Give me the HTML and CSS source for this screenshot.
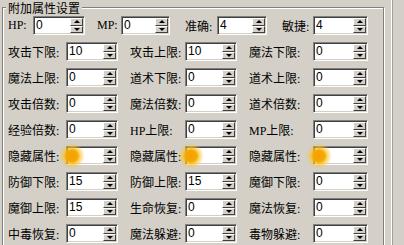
FILE: index.html
```html
<!DOCTYPE html>
<html lang="zh-CN">
<head>
  <meta charset="UTF-8" />
  <title>附加属性设置</title>
  <link rel="stylesheet" href="styles.css">
</head>
<body>
  <div class="group">
    <div class="title">附加属性设置</div>

    <div class="top-row">
      <label>HP:</label>
      <div class="spin"><span class="val">0</span><span class="btns"><i class="up"></i><i class="down"></i></span></div>
      <label>MP:</label>
      <div class="spin"><span class="val">0</span><span class="btns"><i class="up"></i><i class="down"></i></span></div>
      <label>准确:</label>
      <div class="spin"><span class="val">4</span><span class="btns"><i class="up"></i><i class="down"></i></span></div>
      <label>敏捷:</label>
      <div class="spin"><span class="val">4</span><span class="btns"><i class="up"></i><i class="down"></i></span></div>
    </div>

    <div class="grid">
      <label>攻击下限:</label>
      <div class="spin"><span class="val">10</span><span class="btns"><i class="up"></i><i class="down"></i></span></div>
      <label>攻击上限:</label>
      <div class="spin"><span class="val">10</span><span class="btns"><i class="up"></i><i class="down"></i></span></div>
      <label>魔法下限:</label>
      <div class="spin"><span class="val">0</span><span class="btns"><i class="up"></i><i class="down"></i></span></div>

      <label>魔法上限:</label>
      <div class="spin"><span class="val">0</span><span class="btns"><i class="up"></i><i class="down"></i></span></div>
      <label>道术下限:</label>
      <div class="spin"><span class="val">0</span><span class="btns"><i class="up"></i><i class="down"></i></span></div>
      <label>道术上限:</label>
      <div class="spin"><span class="val">0</span><span class="btns"><i class="up"></i><i class="down"></i></span></div>

      <label>攻击倍数:</label>
      <div class="spin"><span class="val">0</span><span class="btns"><i class="up"></i><i class="down"></i></span></div>
      <label>魔法倍数:</label>
      <div class="spin"><span class="val">0</span><span class="btns"><i class="up"></i><i class="down"></i></span></div>
      <label>道术倍数:</label>
      <div class="spin"><span class="val">0</span><span class="btns"><i class="up"></i><i class="down"></i></span></div>

      <label>经验倍数:</label>
      <div class="spin"><span class="val">0</span><span class="btns"><i class="up"></i><i class="down"></i></span></div>
      <label>HP上限:</label>
      <div class="spin"><span class="val">0</span><span class="btns"><i class="up"></i><i class="down"></i></span></div>
      <label>MP上限:</label>
      <div class="spin"><span class="val">0</span><span class="btns"><i class="up"></i><i class="down"></i></span></div>

      <label>隐藏属性:</label>
      <div class="spin"><span class="blob"></span><span class="val"></span><span class="btns"><i class="up"></i><i class="down"></i></span></div>
      <label>隐藏属性:</label>
      <div class="spin"><span class="blob"></span><span class="val"></span><span class="btns"><i class="up"></i><i class="down"></i></span></div>
      <label>隐藏属性:</label>
      <div class="spin"><span class="blob"></span><span class="val"></span><span class="btns"><i class="up"></i><i class="down"></i></span></div>

      <label>防御下限:</label>
      <div class="spin"><span class="val">15</span><span class="btns"><i class="up"></i><i class="down"></i></span></div>
      <label>防御上限:</label>
      <div class="spin"><span class="val">15</span><span class="btns"><i class="up"></i><i class="down"></i></span></div>
      <label>魔御下限:</label>
      <div class="spin"><span class="val">0</span><span class="btns"><i class="up"></i><i class="down"></i></span></div>

      <label>魔御上限:</label>
      <div class="spin"><span class="val">15</span><span class="btns"><i class="up"></i><i class="down"></i></span></div>
      <label>生命恢复:</label>
      <div class="spin"><span class="val">0</span><span class="btns"><i class="up"></i><i class="down"></i></span></div>
      <label>魔法恢复:</label>
      <div class="spin"><span class="val">0</span><span class="btns"><i class="up"></i><i class="down"></i></span></div>

      <label>中毒恢复:</label>
      <div class="spin"><span class="val">0</span><span class="btns"><i class="up"></i><i class="down"></i></span></div>
      <label>魔法躲避:</label>
      <div class="spin"><span class="val">0</span><span class="btns"><i class="up"></i><i class="down"></i></span></div>
      <label>毒物躲避:</label>
      <div class="spin"><span class="val">0</span><span class="btns"><i class="up"></i><i class="down"></i></span></div>
    </div>
  </div>
  <div class="edge"></div>
</body>
</html>
```

FILE: styles.css
```css
body {
  margin: 0;
  padding: 1px 0 0 2px;
  height: 244px;
  overflow: hidden;
  display: flex;
  align-items: flex-start;
  background-color: #d4d0c8;
  font-family: "Liberation Serif", "Noto Sans CJK SC", serif;
  font-size: 12px;
  color: #000;
}

/* 分组框 */
.group {
  box-sizing: border-box;
  width: 382px;
  height: 270px;
  margin-top: 6px;
  padding: 0 0 0 5px;
  border: 1px solid #808080;
  box-shadow: inset 1px 1px #fff, 1px 1px #fff;
}

.title {
  width: fit-content;
  margin: -7px 0 0 -2px;
  padding: 0 2px;
  line-height: 14px;
  background-color: #d4d0c8;
  font-family: "Noto Sans CJK SC", sans-serif;
}

.edge {
  width: 1px;
  height: 245px;
  margin: -1px 0 0 7px;
  border-left: 1px solid #fff;
  background-color: #a0a0a0;
}

label {
  display: flex;
  align-items: center;
  white-space: nowrap;
}

.top-row {
  display: grid;
  grid-template-columns: 25px 52px 36px 49px 47px 50px 46px 55px;
  height: 19px;
  margin-top: 1px;
}

.top-row label:nth-of-type(2) { padding-left: 12px; }
.top-row label:nth-of-type(3),
.top-row label:nth-of-type(4) { padding-left: 15px; }

.grid {
  display: grid;
  grid-template-columns: 58px 52px 67px 52px 76px 55px;
  grid-auto-rows: 19px;
  row-gap: 7px;
  margin-top: 7px;
}

.grid label:nth-of-type(3n+2),
.grid label:nth-of-type(3n) { padding-left: 12px; }

/* 数值输入框 */
.spin {
  position: relative;
  display: flex;
  box-sizing: border-box;
  height: 19px;
  padding: 1px;
  background-color: #fff;
  border: 1px solid;
  border-color: #808080 #fff #fff #808080;
  box-shadow: inset 1px 1px #404040, inset -1px -1px #d4d0c8;
}

.val {
  flex: 1;
  padding-left: 1px;
  font-family: "Liberation Sans", Arial, sans-serif;
  font-size: 12px;
  line-height: 15px;
}

.btns {
  display: flex;
  flex-direction: column;
  width: 13px;
}

.btns i {
  flex: 1;
  display: flex;
  align-items: center;
  justify-content: center;
  box-sizing: border-box;
  background-color: #d4d0c8;
  border: 1px solid;
  border-color: #fff #404040 #404040 #fff;
}

.btns i::after {
  content: "";
  border-left: 3px solid transparent;
  border-right: 3px solid transparent;
}

.btns .up::after { border-bottom: 3px solid #000; }
.btns .down::after { border-top: 3px solid #000; }

.blob {
  position: absolute;
  left: -8px;
  top: -4px;
  width: 26px;
  height: 26px;
  border-radius: 50%;
  background: radial-gradient(circle, #f2a000 0, #f5a805 30%, rgba(252, 196, 40, 0.7) 45%, rgba(255, 220, 90, 0) 70%);
}
```
